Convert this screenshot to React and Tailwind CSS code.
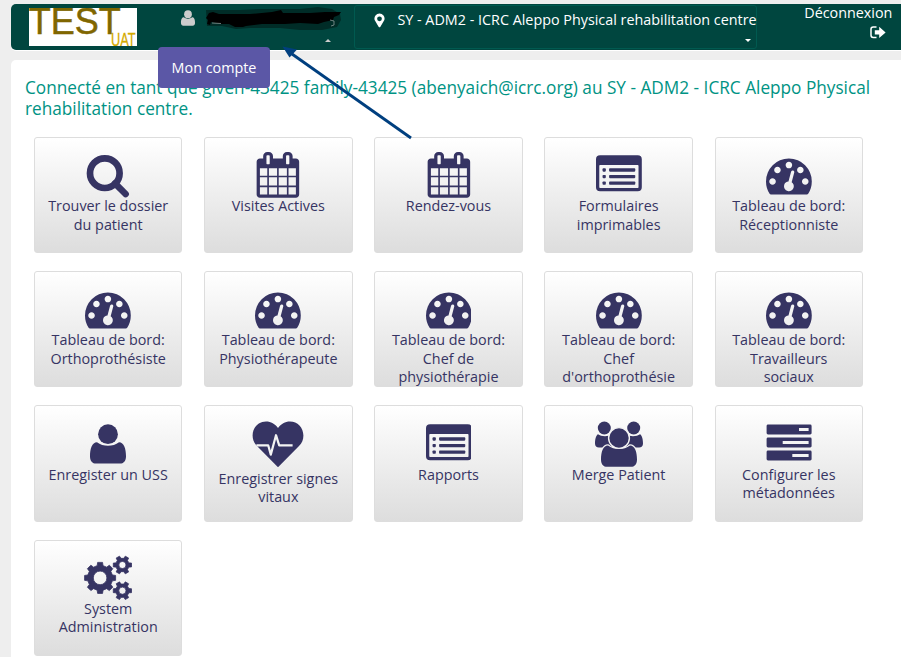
import React from "react";

const CALENDAR =
  "M192 1664h288v-288h-288v288zm352 0h320v-288h-320v288zm-352-352h288v-320h-288v320zm352 0h320v-320h-320v320zm-352-384h288v-288h-288v288zm736 736h320v-288h-320v288zm-384-736h320v-288h-320v288zm768 736h288v-288h-288v288zm-384-352h320v-320h-320v320zm-352-864v-288q0-13-9.5-22.5t-22.5-9.5h-64q-13 0-22.5 9.5t-9.5 22.5v288q0 13 9.5 22.5t22.5 9.5h64q13 0 22.5-9.5t9.5-22.5zm736 864h288v-320h-288v320zm-384-384h320v-288h-320v288zm384 0h288v-288h-288v288zm32-480v-288q0-13-9.5-22.5t-22.5-9.5h-64q-13 0-22.5 9.5t-9.5 22.5v288q0 13 9.5 22.5t22.5 9.5h64q13 0 22.5-9.5t9.5-22.5zm384-64v1280q0 52-38 90t-90 38h-1408q-52 0-90-38t-38-90v-1280q0-52 38-90t90-38h128v-96q0-66 47-113t113-47h64q66 0 113 47t47 113v96h384v-96q0-66 47-113t113-47h64q66 0 113 47t47 113v96h128q52 0 90 38t38 90z";
const GAUGE =
  "M384 1152q0-53-37.5-90.5t-90.5-37.5-90.5 37.5-37.5 90.5 37.5 90.5 90.5 37.5 90.5-37.5 37.5-90.5zm192-448q0-53-37.5-90.5t-90.5-37.5-90.5 37.5-37.5 90.5 37.5 90.5 90.5 37.5 90.5-37.5 37.5-90.5zm428 481l101-382q6-26-7.5-48.5t-38.5-29.5-48 6.5-30 39.5l-101 382q-60 5-107 43.5t-63 98.5q-20 77 20 146t117 89 146-20 89-117q16-60-6-117t-72-91zm660-33q0-53-37.5-90.5t-90.5-37.5-90.5 37.5-37.5 90.5 37.5 90.5 90.5 37.5 90.5-37.5 37.5-90.5zm-640-640q0-53-37.5-90.5t-90.5-37.5-90.5 37.5-37.5 90.5 37.5 90.5 90.5 37.5 90.5-37.5 37.5-90.5zm448 192q0-53-37.5-90.5t-90.5-37.5-90.5 37.5-37.5 90.5 37.5 90.5 90.5 37.5 90.5-37.5 37.5-90.5zm320 448q0 261-141 483-19 29-54 29h-1402q-35 0-54-29-141-221-141-483 0-182 71-348t191-286 286-191 348-71 348 71 286 191 191 286 71 348z";

const Glyph = ({ d }) => (
  <svg viewBox="0 0 1792 1792" className="h-[45.8px] w-[45.8px] shrink-0" fill="currentColor">
    <path d={d} />
  </svg>
);

const SearchIcon = () => (
  <svg viewBox="0 0 46 46" className="h-[46px] w-[46px] shrink-0" fill="none" stroke="currentColor">
    <circle cx="19.8" cy="21.2" r="14.8" strokeWidth="6.7" />
    <path d="M30 31.4L40.6 42" strokeWidth="6.6" strokeLinecap="round" />
  </svg>
);

const ListIcon = () => (
  <svg viewBox="0 0 1792 1792" className="h-[45.8px] w-[45.8px] shrink-0" fill="currentColor">
    <path
      fillRule="evenodd"
      d="M160 128h1472a160 160 0 0 1 160 160v1088a160 160 0 0 1-160 160H160a160 160 0 0 1-160-160V288a160 160 0 0 1 160-160zM160 512a32 32 0 0 0-32 32v832a32 32 0 0 0 32 32h1472a32 32 0 0 0 32-32V544a32 32 0 0 0-32-32z"
    />
    {[640, 896, 1152].map((y) => (
      <g key={y}>
        <rect x="256" y={y} width="128" height="128" rx="32" />
        <rect x="512" y={y} width="1024" height="128" rx="32" />
      </g>
    ))}
  </svg>
);

const USER_BODY =
  "M12 21.3C7 21.3 5 28 5 35.2C5 40 7.5 42.6 11 42.6H35C38.5 42.6 41 40 41 35.2C41 28 39 21.3 34 21.3C31 23.7 27 24.8 23 24.8C19 24.8 15 23.7 12 21.3Z";

const UserIcon = ({ className = "h-[46px] w-[46px] shrink-0" }) => (
  <svg viewBox="0 0 46 46" className={className} fill="currentColor">
    <circle cx="23" cy="13.2" r="9.9" />
    <path d={USER_BODY} />
  </svg>
);

const HeartIcon = () => (
  <svg viewBox="0 0 52 50" className="h-[50px] w-[52px] shrink-0">
    <path
      fill="currentColor"
      d="M26 46.3L5 25C2 22 .6 18.5 .6 14.5C.6 6.5 6.5 .4 14 .4C19 .4 23 2.8 26 7C29 2.8 33 .4 38 .4C45.5 .4 51.4 6.5 51.4 14.5C51.4 18.5 50 22 47 25Z"
    />
    <path
      d="M4.4 24.3H16.2L18.8 33.6L24 14.2L27.2 24.3H40.6"
      fill="none"
      stroke="#f3f3f3"
      strokeWidth="2.2"
      strokeLinejoin="round"
    />
  </svg>
);

const GroupIcon = () => (
  <svg viewBox="0 0 48 46" className="h-[46px] w-12 shrink-0" fill="currentColor">
    <circle cx="9.3" cy="7" r="6.5" />
    <circle cx="38.7" cy="7" r="6.5" />
    <path d="M3 13.3C.8 14.5 0 19 0 22.5C0 25 1.5 26.6 4 26.6H17V13.8C12 16 6 15.6 3 13.3Z" />
    <path d="M45 13.3C47.2 14.5 48 19 48 22.5C48 25 46.5 26.6 44 26.6H31V13.8C36 16 42 15.6 45 13.3Z" />
    <path d={USER_BODY} transform="translate(1 3.2)" stroke="#f3f3f3" strokeWidth="2.4" paintOrder="stroke" />
    <circle cx="24" cy="17" r="10.4" stroke="#f3f3f3" strokeWidth="1.4" />
  </svg>
);

const TasksIcon = () => (
  <svg viewBox="0 0 46 46" className="h-[46px] w-[46px] shrink-0">
    {[
      [3.6, 33],
      [16.6, 16.7],
      [29.6, 26.3],
    ].map(([y, x]) => (
      <g key={y}>
        <rect x="0.6" y={y} width="45" height="9.8" rx="1.4" fill="currentColor" />
        <rect x={x} y={y + 3.4} width={42.6 - x} height="3" fill="#f3f3f3" />
      </g>
    ))}
  </svg>
);

// Outline of a cog: tapered teeth around a ring, with a round hole.
function cog(cx, cy, outer, root, hole, teeth) {
  const step = (Math.PI * 2) / teeth;
  const pts = [];
  for (let i = 0; i < teeth; i++) {
    const a = i * step;
    [
      [root, -0.3],
      [outer, -0.2],
      [outer, 0.2],
      [root, 0.3],
    ].forEach(([r, k]) =>
      pts.push(`${(cx + r * Math.cos(a + k * step)).toFixed(2)} ${(cy + r * Math.sin(a + k * step)).toFixed(2)}`)
    );
  }
  return `M${pts.join("L")}ZM${cx - hole} ${cy}a${hole} ${hole} 0 1 0 ${hole * 2} 0a${hole} ${hole} 0 1 0 ${-hole * 2} 0Z`;
}

const CogsIcon = () => (
  <svg
    viewBox="0 0 50 46"
    className="h-[46px] w-[50px] shrink-0"
    fill="currentColor"
    fillRule="evenodd"
    stroke="currentColor"
    strokeWidth="0.8"
    strokeLinejoin="round"
  >
    <path d={cog(17.1, 22.9, 15.7, 12.6, 6.8, 8)} />
    <path d={cog(39.4, 10, 9.3, 6.8, 3.6, 6)} />
    <path d={cog(39.4, 35.7, 9.3, 6.8, 3.6, 6)} />
  </svg>
);

const calendar = <Glyph d={CALENDAR} />;
const gauge = <Glyph d={GAUGE} />;

const apps = [
  { icon: <SearchIcon />, lines: ["Trouver le dossier", "du patient"] },
  { icon: calendar, lines: ["Visites Actives"] },
  { icon: calendar, lines: ["Rendez-vous"] },
  { icon: <ListIcon />, lines: ["Formulaires", "imprimables"] },
  { icon: gauge, lines: ["Tableau de bord:", "Réceptionniste"] },
  { icon: gauge, lines: ["Tableau de bord:", "Orthoprothésiste"] },
  { icon: gauge, lines: ["Tableau de bord:", "Physiothérapeute"] },
  { icon: gauge, lines: ["Tableau de bord:", "Chef de", "physiothérapie"] },
  { icon: gauge, lines: ["Tableau de bord:", "Chef", "d'orthoprothésie"] },
  { icon: gauge, lines: ["Tableau de bord:", "Travailleurs", "sociaux"] },
  { icon: <UserIcon />, lines: ["Enregister un USS"] },
  { icon: <HeartIcon />, tall: true, lines: ["Enregistrer signes", "vitaux"] },
  { icon: <ListIcon />, lines: ["Rapports"] },
  { icon: <GroupIcon />, lines: ["Merge Patient"] },
  { icon: <TasksIcon />, lines: ["Configurer les", "métadonnées"] },
  { icon: <CogsIcon />, lines: ["System", "Administration"] },
];

const Tile = ({ icon, tall, lines }) => (
  <a className="flex flex-col items-center rounded-[3px] border border-[#ddd] bg-linear-to-b from-white to-[#ddd] pt-[14.3px] text-center text-[14.35px] leading-[18.35px] text-[#363463]">
    <span className={tall ? "flex h-[48.9px] items-start" : "flex h-[44.9px] items-start"}>{icon}</span>
    {lines.map((l) => (
      <span key={l} className="whitespace-nowrap">
        {l}
      </span>
    ))}
  </a>
);

const Logo = () => (
  <svg viewBox="0 0 108 38" className="ml-[18px] mt-1 h-[38px] w-[108px] shrink-0 bg-white">
    <text x="-0.3" y="25.6" fontFamily="Liberation Sans, Arial, sans-serif" fontSize="36" fill="#806600" stroke="#806600" strokeWidth="0.5">
      TEST
    </text>
    <text transform="translate(82 37.8) scale(.72 1)" fontFamily="Liberation Sans, Arial, sans-serif" fontSize="17.8" fill="#d4aa00" stroke="#d4aa00" strokeWidth="0.3">
      UAT
    </text>
  </svg>
);

export default function App() {
  return (
    <div className="relative h-[657px] w-[901px] overflow-hidden bg-[#eee] pl-[11px] pt-1 font-['Open_Sans',sans-serif]">
      <header className="flex h-[46px] rounded-l-[5px] bg-[#00463f] text-[14.35px] leading-[18px] text-white shadow-[0_1px_0_white]">
        <Logo />
        <div className="flex w-[217px] shrink-0 flex-col pl-[42px] text-[#ccc]">
          <UserIcon className="mt-[5px] h-[18px] w-[18px]" />
          <svg viewBox="0 0 6 3" className="ml-[146px] mt-[12px] h-[3px] w-[6px]" fill="#ccc">
            <path d="M0 3L3 0L6 3Z" />
          </svg>
        </div>
        <div className="mt-px flex h-[44px] w-[403px] shrink-0 flex-col rounded-[3px] border border-[#005a50]">
          <div className="flex items-center pt-[5px]">
            <svg viewBox="0 0 12 15" className="ml-[19px] h-[15px] w-[11px] shrink-0" fill="currentColor">
              <path
                fillRule="evenodd"
                d="M6 0a5.5 5.5 0 0 1 5.3 7L7 14.2Q6 15.6 5 14.2L.7 7A5.5 5.5 0 0 1 6 0ZM6 3a2.6 2.6 0 1 0 0 5.2A2.6 2.6 0 1 0 6 3Z"
              />
            </svg>
            <span className="ml-[12.4px] whitespace-nowrap">SY - ADM2 - ICRC Aleppo Physical rehabilitation centre</span>
          </div>
          <svg viewBox="0 0 6 3" className="ml-[390px] mt-[10px] h-[3px] w-[6px]" fill="currentColor">
            <path d="M0 0L3 3L6 0Z" />
          </svg>
        </div>
        <div className="flex flex-1 flex-col items-end pr-[8.6px]">
          <span>Déconnexion</span>
          <svg viewBox="0 0 16 13" className="mr-[6.4px] mt-[4px] h-[13px] w-[16px]">
            <path d="M6.5 1.1H3.2Q1 1.1 1 3.2V9.3Q1 11.5 3.2 11.5H6.5" fill="none" stroke="currentColor" strokeWidth="1.5" />
            <path d="M4.8 4.3H9.2V.8L15.6 6.4L9.2 12V8.6H4.8Z" fill="currentColor" />
          </svg>
        </div>
      </header>

      <main className="mt-[10px] h-[597px] rounded-tl-[5px] bg-white pl-[14px] pt-[17px]">
        <h4 className="text-[17.22px] leading-[21px] text-[#009384]">
          <span className="block whitespace-nowrap">
            Connecté en tant que given-43425 family-43425 (abenyaich@icrc.org) au SY - ADM2 - ICRC Aleppo Physical
          </span>
          <span className="block">rehabilitation centre.</span>
        </h4>
        <div className="ml-[9px] mt-[18px] grid auto-rows-[116.2px] grid-cols-[repeat(5,148.4px)] gap-x-[21.75px] gap-y-[18px]">
          {apps.map((app, i) => (
            <Tile key={i} {...app} />
          ))}
        </div>
      </main>

      <div className="absolute left-[158px] top-[47px] flex h-[41px] w-[112px] items-center justify-center rounded-[4px] bg-[#5b57a6] text-[14.35px] text-white">
        Mon compte
      </div>

      <svg viewBox="0 0 901 140" className="absolute left-0 top-0 h-[140px] w-[901px]">
        <path
          d="M206 10L240 10L262 9L300 9L318 7L332 9L340 14L341 20L337 27L322 30L300 30L280 28L250 28L236 29L222 26L207 26Z"
          fill="#002c27"
        />
        <path
          d="M206 18L209 13L213 12L219 14L250 14L272 12L281 10L283 13L310 13L325 12L341 12L339 15L334 17L333 20L324 22L318 24L300 23L285 24L262 24L246 26L243 27L235 27L229 24L221 24L211 22L210 25L207 24L208 20Z"
          fill="#000"
        />
        <path d="M330 20L334 21L334 25L331 26M212 23L221 23.5" fill="none" stroke="#8a9a98" strokeWidth="0.8" />
        <path d="M411 138L292 54" stroke="#003f7f" strokeWidth="2.8" />
        <path d="M282.5 46.5L297 49.5L289.5 57.5Z" fill="#003f7f" />
      </svg>
    </div>
  );
}
